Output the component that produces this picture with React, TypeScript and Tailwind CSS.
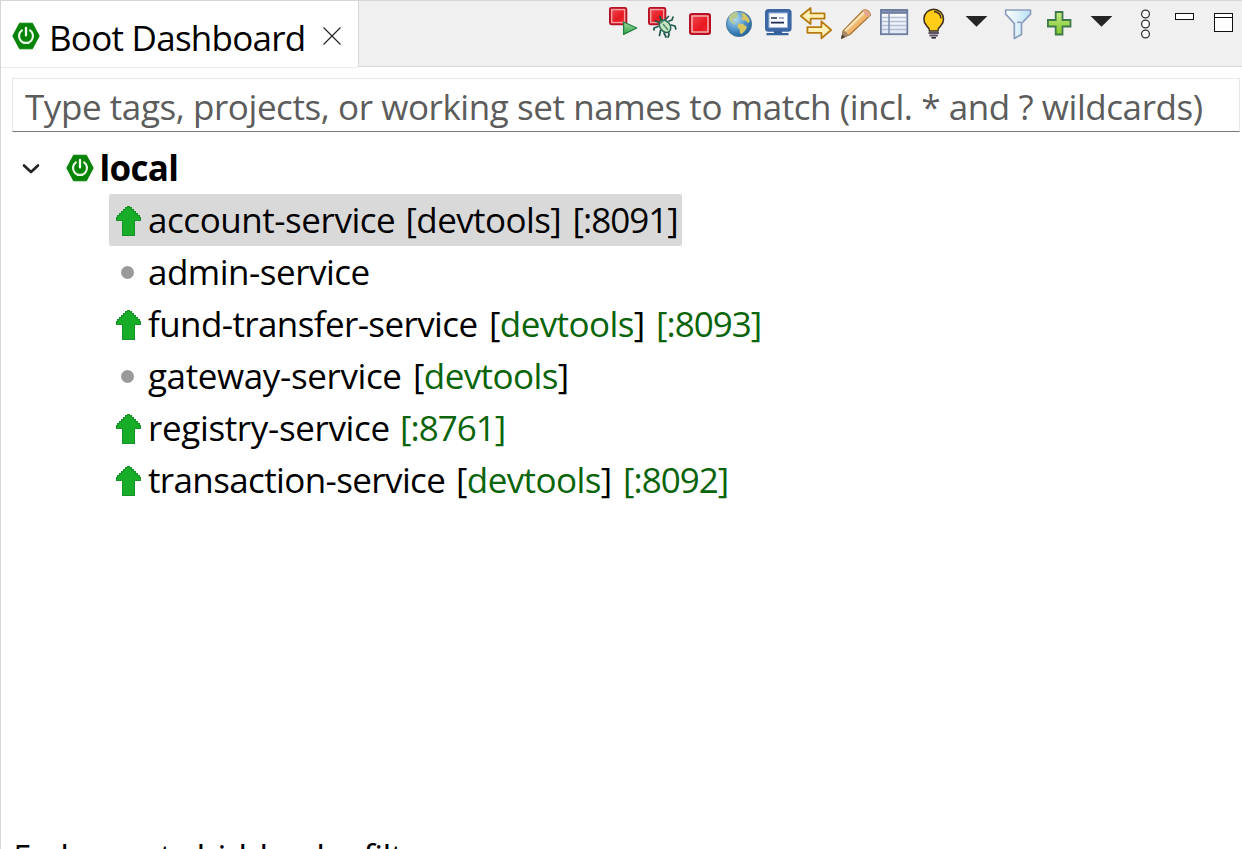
import React from "react";

function BootIcon() {
  return (
    <svg className="block h-[28px] w-[28px] shrink-0" viewBox="0 0 28 28">
      <path d="M7.6 1.2h12.8L27.2 14l-6.8 12.8H7.6L.8 14z" fill="#078407" stroke="#078407" strokeWidth="1" strokeLinejoin="round" />
      <path d="M9.900 8.300a7 7 0 1 0 8.200 0" fill="none" stroke="#e8f6e4" strokeWidth="2.200" strokeLinecap="round" />
      <path d="M14 5.800v7.600" stroke="#f2fbf0" strokeWidth="2.300" strokeLinecap="round" />
    </svg>
  );
}

function Tool({ x, w, className, children }: { x: number; w: number; className: string; children: React.ReactNode }) {
  return (
    <svg className={`block h-[48px] shrink-0 overflow-visible ${className}`} viewBox={`${x} 0 ${w} 48`}>
      {children}
    </svg>
  );
}

function SmallStop({ x }: { x: number }) {
  return (
    <>
      <rect x={x} y="7.8" width="16.5" height="16.5" rx="1.5" fill="url(#red)" stroke="#b51225" strokeWidth="1.8" />
      <rect x={x + 1.8} y="9.6" width="12.9" height="12.9" fill="none" stroke="#f4a0a0" strokeWidth="1.4" />
    </>
  );
}

function Toolbar() {
  return (
    <div className="-mt-px flex h-[48px] shrink-0">
      <Tool x={606} w={39} className="w-[39px]">
        <defs>
          <linearGradient id="red" x1="0" y1="0" x2="1" y2="1"><stop offset="0" stopColor="#ee5058" /><stop offset=".6" stopColor="#e81820" /><stop offset="1" stopColor="#f0343c" /></linearGradient>
          <linearGradient id="play" x1="0" y1="0" x2="0" y2="1"><stop offset="0" stopColor="#a5d9a0" /><stop offset="1" stopColor="#2ea646" /></linearGradient>
          <radialGradient id="sea" cx=".35" cy=".3" r=".75"><stop offset="0" stopColor="#b5dcf2" /><stop offset=".5" stopColor="#5a9cd0" /><stop offset="1" stopColor="#1d5c98" /></radialGradient>
          <linearGradient id="wood" x1="0" y1="0" x2="1" y2="1"><stop offset=".2" stopColor="#fbd9a0" /><stop offset=".8" stopColor="#e49a40" /></linearGradient>
          <linearGradient id="glass" x1="0" y1="0" x2="1" y2="0"><stop offset="0" stopColor="#fff" /><stop offset="1" stopColor="#b8e0f4" /></linearGradient>
          <linearGradient id="plus" x1="0" y1="0" x2="0" y2="1"><stop offset="0" stopColor="#c3e884" /><stop offset="1" stopColor="#7fca28" /></linearGradient>
          <linearGradient id="tbl" x1="0" y1="0" x2="0" y2="1"><stop offset="0" stopColor="#fff" /><stop offset="1" stopColor="#dfe6f2" /></linearGradient>
        </defs>
        <SmallStop x={609.9} />
        <path d="M623.6 22v12.4L636.8 28z" fill="url(#play)" stroke="#238044" strokeWidth="1.3" strokeLinejoin="round" />
      </Tool>
      <Tool x={645} w={39} className="w-[39px]">
        <SmallStop x={648.9} />
        <g fill="none" stroke="#20584f" strokeWidth="1.700" strokeLinecap="round" strokeLinejoin="round">
          <path d="M661 20.5l-1-4M665.5 19.5l3-3M659 22.5l-3.5-1.5M658 26.5l-4 1.5v2M660.5 30.5l-1 5M669 21l3-1 1-3M671 25l4 1 .8 3M668.5 31l.5 4 -1 2M664 33l2 4" />
        </g>
        <ellipse cx="665" cy="26.2" rx="5" ry="6.8" transform="rotate(-38 665 26.2)" fill="#c4e5bd" stroke="#216555" strokeWidth="1.5" />
        <path d="M660.3 23.5l4-3.5M663 24l5 6" stroke="#438770" strokeWidth="1.3" />
      </Tool>
      <Tool x={684} w={39} className="w-[39px]">
        <rect x="690" y="14" width="20" height="20" rx="2" fill="url(#red)" stroke="#b51225" strokeWidth="2" />
        <rect x="692" y="16" width="16" height="16" rx=".5" fill="none" stroke="#f5aaa8" strokeWidth="1.6" />
      </Tool>
      <Tool x={723} w={39} className="w-[39px]">
        <circle cx="739" cy="24" r="12.6" fill="url(#sea)" stroke="#4b7898" strokeWidth=".9" />
        <path d="M729.500 15.500q3-3 7-3.800l1.500 1-1.500 1.800 1.600 1.500-2.300 2.500-2.600.5-.5 2.200 2.800 2.200-1 1-3.500-2.200-2.200-3.500z" fill="#b9c88c" />
        <path d="M741 12.500l4 1.500 4 4.500.8 3-1.800 1.500-2.400-2.500-2.800-.3-1.600-2 1.600-1.500zM738.500 23.500l4.500.4 4 3-1.800 3.700-3.500 3.400-1.500-.5-.7-4-2.300-2.800z" fill="#d6c663" />
      </Tool>
      <Tool x={762} w={39} className="w-[39px]">
        <rect x="766.9" y="10.900" width="22.800" height="18.900" rx="1.6" fill="#fff" stroke="#3c67a4" strokeWidth="3.800" />
        <rect x="769" y="13" width="18.600" height="14.700" fill="#f8fbff" stroke="#7ca0cc" strokeWidth=".8" />
        <path d="M771 18h6M771 22.6h13" stroke="#1d2f55" strokeWidth="1.6" />
        <path d="M779 18h5" stroke="#8395b5" strokeWidth="1.4" />
        <path d="M774 31h8v2h6.5v2.2h-22V33h7.5z" fill="#34609d" />
      </Tool>
      <Tool x={801} w={39} className="w-[39px]">
        <g fill="#fff0b8" stroke="#b67c12" strokeWidth="1.8" strokeLinejoin="round">
          <path d="M800.8 16l9.8-8v5.4h14v5.2h-14V24z" />
          <path d="M831.2 30l-9.8-8.7v5.8h-14v5.7h14v5.5z" />
        </g>
      </Tool>
      <Tool x={840} w={39} className="w-[39px]">
        <path d="M843 31L863 10.5q2-1.5 4.5 0t3 4.5L850 34.5l-8.5 4z" fill="url(#wood)" stroke="#a97332" strokeWidth="1.1" strokeLinejoin="round" />
        <path d="M862.5 11q2-1.8 5-.2t3 4.5l-2 2q-4-1.7-6-6.3z" fill="#e4a78c" />
        <path d="M845 31L864 12.5" stroke="#ffe7bd" strokeWidth="2" />
        <path d="M843 31l3 .5 1 2.3 3 .7-8.5 4z" fill="#a5866a" />
        <path d="M842.2 34.5l2.8 2.4-4 1.8z" fill="#3b3b3f" />
      </Tool>
      <Tool x={879} w={39} className="w-[39px]">
        <rect x="880.9" y="10" width="26.4" height="24.2" fill="url(#tbl)" stroke="#6c7d9f" strokeWidth="1.8" />
        <path d="M881 11.500h26" stroke="#6c7d9f" strokeWidth="4.600" />
        <path d="M882 11.500h24" stroke="#8494b2" strokeWidth="1" />
        <path d="M882 17.5h24M882 21.5h24M882 25.5h24M882 29.5h24" stroke="#b2bfd5" strokeWidth="1.3" />
        <path d="M889 14v20" stroke="#7c8cac" strokeWidth="1.5" />
      </Tool>
      <Tool x={918} w={39} className="w-[39px]">
        <path d="M929.5 31q0-2.8-3-5.4a9.800 9.800 0 1 1 14.4 0q-3 2.600-3 5.400z" fill="#ffcd18" stroke="#3a2b1d" strokeWidth="1.5" />
        <path d="M934 11.5q6.5.7 7 7" fill="none" stroke="#3a2b1d" strokeWidth="1.4" />
        <path d="M928.5 33h10.4M929.5 35.5h8.4" stroke="#5e5163" strokeWidth="1.8" />
        <path d="M931.5 37.8h4.4" stroke="#292631" strokeWidth="1.6" />
      </Tool>
      <Tool x={957} w={45} className="w-[45px]">
        <path d="M965.6 16h21.8l-10.9 10.8z" fill="#252525" />
      </Tool>
      <Tool x={1002} w={39} className="w-[39px]">
        <path d="M1005.7 10h24.8v4.2l-9 9.3v11l-7.200 4v-15l-8.600-9.300z" fill="url(#glass)" stroke="#8a9dbd" strokeWidth="1.7" strokeLinejoin="round" />
        <path d="M1017 22.3h4.500" stroke="#8a9dbd" strokeWidth="1.5" />
      </Tool>
      <Tool x={1041} w={42} className="w-[42px]">
        <path d="M1055.7 12h6.8v8h8v6.5h-8v8h-6.8v-8h-7.8V20h7.8z" fill="url(#plus)" stroke="#3f784d" strokeWidth="1.8" />
      </Tool>
      <Tool x={1083} w={42} className="w-[42px]">
        <path d="M1090.6 16h21.8l-10.9 10.8z" fill="#252525" />
      </Tool>
      <Tool x={1125} w={40} className="w-[40px]">
        <g fill="#fff" stroke="#333" strokeWidth="1.3">
          <circle cx="1145.5" cy="14" r="3.9" />
          <circle cx="1145.5" cy="24" r="3.9" />
          <circle cx="1145.5" cy="34" r="3.9" />
        </g>
      </Tool>
      <Tool x={1165} w={39} className="w-[39px]">
        <rect x="1175.5" y="13.5" width="18" height="6" fill="#fff" stroke="#111" />
      </Tool>
      <Tool x={1204} w={38} className="w-[38px]">
        <rect x="1214.5" y="13.5" width="18" height="18" fill="#fff" stroke="#111" />
        <path d="M1215 17.5h18" stroke="#111" />
      </Tool>
    </div>
  );
}

function RunningIcon() {
  return (
    <svg className="mt-px block h-[32px] w-[26px]" viewBox="0 0 26 32" shapeRendering="crispEdges">
      <path d="M12 1.500h2v1h2v2h2v2h2v2h2v2h2v2h1v3h-6V30.500H7V15.500H1.500v-3h1v-2h2v-2h2v-2h2v-2h2v-2h1.500z" fill="#18ad28" stroke="#169326" strokeWidth="1" />
    </svg>
  );
}

function StoppedIcon() {
  return <span className="block size-[13px] rounded-full bg-[#9a9a9a]" />;
}

type Service = { name: string; nameClass: string; running: boolean; devtools: boolean; port?: string; selected?: boolean };

const services: Service[] = [
  { name: "account-service", nameClass: "w-[257.5px] tracking-[-0.45px]", running: true, devtools: true, port: "[:8091]", selected: true },
  { name: "admin-service", nameClass: "w-[230px] tracking-[-0.5px]", running: false, devtools: false },
  { name: "fund-transfer-service", nameClass: "w-[341px] tracking-[-0.6px]", running: true, devtools: true, port: "[:8093]" },
  { name: "gateway-service", nameClass: "w-[265px] tracking-[-0.38px]", running: false, devtools: true },
  { name: "registry-service", nameClass: "w-[252px] tracking-[-0.35px]", running: true, devtools: false, port: "[:8761]" },
  { name: "transaction-service", nameClass: "w-[308px] tracking-[-0.62px]", running: true, devtools: true, port: "[:8092]" },
];

function ServiceRow({ name, nameClass, running, devtools, port, selected }: Service) {
  const green = selected ? "text-black" : "text-[#0a640a]";
  return (
    <li className={`flex h-[52px] items-center whitespace-nowrap leading-[52px] ${selected ? "w-[573px] rounded-[2px] bg-[#d9d9d9]" : ""}`}>
      <span className="flex w-[39px] shrink-0 justify-start pl-[6px]">
        {running ? <RunningIcon /> : <span className="pl-[6px]"><StoppedIcon /></span>}
      </span>
      <span className={`shrink-0 ${nameClass}`}>{name}</span>
      {devtools && (
        <span className="w-[167px] shrink-0 tracking-[-0.6px]">
          [<span className={green}>devtools</span>]
        </span>
      )}
      {port && <span className={`tracking-[-1px] ${green}`}>{port}</span>}
    </li>
  );
}

export default function App() {
  return (
    <div className="flex h-[849px] w-[1242px] flex-col overflow-hidden border-t border-l border-[#d6d6d6] bg-white font-['Open_Sans',sans-serif] text-[35px] text-black">
      <header className="flex h-[67px] shrink-0">
        <div className="flex h-[67px] w-[357px] shrink-0 items-center border-b border-[#ebebeb] pl-[11px] leading-[66px]">
          <span className="mt-[4px]"><BootIcon /></span>
          <span className="ml-[9px] w-[274px] shrink-0 whitespace-nowrap pt-[8px] tracking-[-0.75px]">Boot Dashboard</span>
          <svg className="mt-[4px] block size-[18px] shrink-0" viewBox="0 0 18 18">
            <path d="M.5.5l17 17M17.5.5l-17 17" stroke="#222" strokeWidth="1.1" />
          </svg>
        </div>
        <div className="flex h-[66px] flex-1 justify-end border-b border-l border-[#d6d6d6] bg-[#f0f0f0]">
          <Toolbar />
        </div>
      </header>
      <div className="mt-[10px] ml-[11px] flex h-[54px] w-[1228px] shrink-0 items-center border border-[#e8e8e8] border-b-[#777777] pl-[12px] leading-[52px]">
        <span className="mt-[3px] whitespace-nowrap tracking-[-0.43px] text-[#5c5c5c]">Type tags, projects, or working set names to match (incl. * and ? wildcards)</span>
      </div>
      <main className="mt-[10px] flex h-[689px] shrink-0 flex-col">
        <div className="flex h-[52px] shrink-0 items-center pl-[21px] font-bold leading-[52px]">
          <svg className="mt-[2px] block h-[12px] w-[18px] shrink-0" viewBox="0 0 18 12">
            <path d="M2 2.5l7 6.500 7-6.500" fill="none" stroke="#222" strokeWidth="2.6" strokeLinecap="round" strokeLinejoin="round" />
          </svg>
          <span className="ml-[26px]"><BootIcon /></span>
          <span className="ml-[5.5px] tracking-[-0.7px]">local</span>
        </div>
        <ul className="ml-[108px]">
          {services.map((s) => <ServiceRow key={s.name} {...s} />)}
        </ul>
      </main>
      <footer className="ml-[12px] h-[52px] shrink-0 whitespace-nowrap leading-[52px] tracking-[-0.5px]">5 elements hidden by filter</footer>
    </div>
  );
}
